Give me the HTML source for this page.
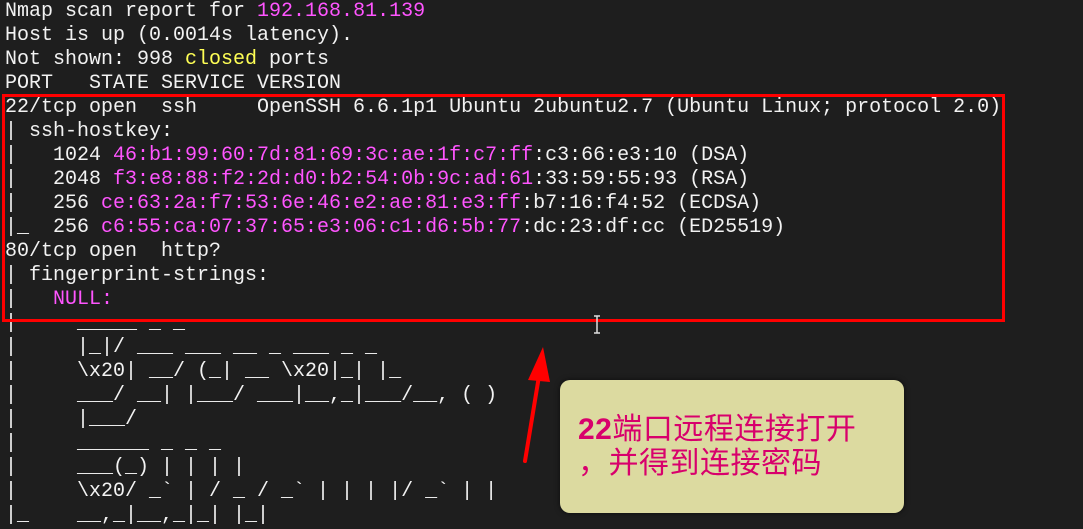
<!DOCTYPE html>
<html><head><meta charset="utf-8"><style>
html,body{margin:0;padding:0;background:#1e1e1e;width:1083px;height:529px;overflow:hidden;position:relative}
pre{margin:0;position:absolute;left:5px;top:0px;font-family:"Liberation Mono",monospace;font-size:20px;line-height:24px;color:#f2f2f2;white-space:pre}
.m{color:#ff55ff}.y{color:#ffff55}
.box{position:absolute;left:2px;top:94px;width:997px;height:222px;border:3px solid #ff0000}
.call{position:absolute;left:560px;top:380px;width:344px;height:133px;background:#dcdaa0;border-radius:10px;box-shadow:0 0 6px rgba(0,0,0,.6)}
.call div{position:absolute;left:18px;font-family:"Liberation Sans","Noto Sans CJK SC",sans-serif;font-size:30px;color:#d8006c;line-height:34px;letter-spacing:0.5px}
</style></head><body>
<pre>Nmap scan report for <span class="m">192.168.81.139</span>
Host is up (0.0014s latency).
Not shown: 998 <span class="y">closed</span> ports
PORT   STATE SERVICE VERSION
22/tcp open  ssh     OpenSSH 6.6.1p1 Ubuntu 2ubuntu2.7 (Ubuntu Linux; protocol 2.0)
| ssh-hostkey:
|   1024 <span class="m">46:b1:99:60:7d:81:69:3c:ae:1f:c7:ff</span>:c3:66:e3:10 (DSA)
|   2048 <span class="m">f3:e8:88:f2:2d:d0:b2:54:0b:9c:ad:61</span>:33:59:55:93 (RSA)
|   256 <span class="m">ce:63:2a:f7:53:6e:46:e2:ae:81:e3:ff</span>:b7:16:f4:52 (ECDSA)
|_  256 <span class="m">c6:55:ca:07:37:65:e3:06:c1:d6:5b:77</span>:dc:23:df:cc (ED25519)
80/tcp open  http?
| fingerprint-strings:
|   <span class="m">NULL:</span>
|     _____ _ _
|     |_|/ ___ ___ __ _ ___ _ _
|     \x20| __/ (_| __ \x20|_| |_
|     ___/ __| |___/ ___|__,_|___/__, ( )
|     |___/
|     ______ _ _ _
|     ___(_) | | | |
|     \x20/ _` | / _ / _` | | | |/ _` | |
|_    __,_|__,_|_| |_|</pre>
<div class="box"></div>
<svg style="position:absolute;left:0;top:0" width="1083" height="529">
<line x1="525" y1="461" x2="540" y2="370" stroke="#ff0000" stroke-width="4" stroke-linecap="round"/>
<polygon points="543,347 528,380 550,382" fill="#ff0000"/>
<path d="M594 316h6M597 316v17M594 333h6" stroke="#ddd" stroke-width="1.5" fill="none"/>
</svg>
<div class="call">
<div style="top:33px"><b>22</b>端口远程连接打开</div>
<div style="top:67px">，并得到连接密码</div>
</div>
</body></html>
